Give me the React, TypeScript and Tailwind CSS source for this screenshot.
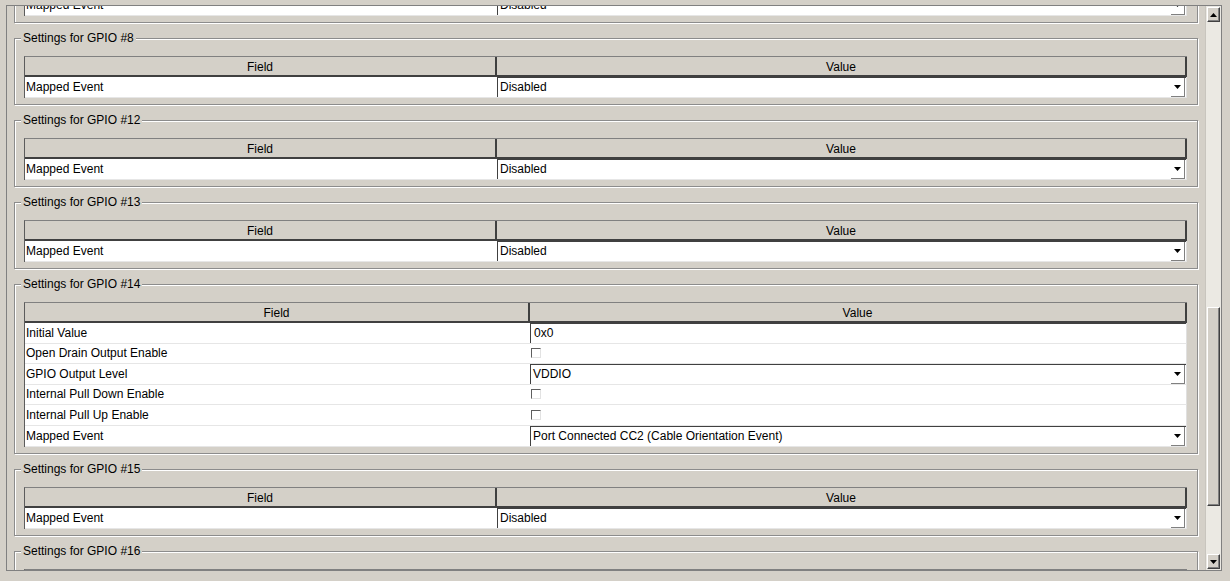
import React from "react";

type Row =
  | { label: string; type: "combo"; value: string; h?: string }
  | { label: string; type: "input"; value: string; h?: string }
  | { label: string; type: "check"; h?: string };

type Group = { name: string; fieldW: string; rows: Row[] };

const single = (name: string): Group => ({
  name,
  fieldW: "w-[472px]",
  rows: [{ label: "Mapped Event", type: "combo", value: "Disabled" }],
});

const groups: Group[] = [
  single("#7"),
  single("#8"),
  single("#12"),
  single("#13"),
  {
    name: "#14",
    fieldW: "w-[505px]",
    rows: [
      { label: "Initial Value", type: "input", value: "0x0", h: "h-[21px]" },
      { label: "Open Drain Output Enable", type: "check", h: "h-[20px]" },
      { label: "GPIO Output Level", type: "combo", value: "VDDIO", h: "h-[21px]" },
      { label: "Internal Pull Down Enable", type: "check", h: "h-[20px]" },
      { label: "Internal Pull Up Enable", type: "check", h: "h-[21px]" },
      {
        label: "Mapped Event",
        type: "combo",
        value: "Port Connected CC2 (Cable Orientation Event)",
        h: "h-[21px]",
      },
    ],
  },
  single("#15"),
  single("#16"),
];

function DownTri() {
  return (
    <svg width="7" height="4" viewBox="0 0 7 4">
      <path d="M0 0H7L3.5 4Z" fill="#000" />
    </svg>
  );
}

function UpTri() {
  return (
    <svg width="7" height="4" viewBox="0 0 7 4">
      <path d="M0 4H7L3.5 0Z" fill="#000" />
    </svg>
  );
}

function ValueCell({ row }: { row: Row }) {
  if (row.type === "combo") {
    return (
      <div className="flex-1 flex items-stretch border-l border-t border-[#404040] bg-white min-w-0">
        <div className="flex-1 flex items-center pl-[2px] pb-[2px] whitespace-nowrap">{row.value}</div>
        <div className="w-[14px] mr-[1px] flex items-center justify-center border-r border-b border-[#808080] bg-white">
          <DownTri />
        </div>
      </div>
    );
  }
  if (row.type === "input") {
    return (
      <div className="flex-1 flex items-center border-l border-t border-[#404040] bg-white pl-[3px] pb-[2px] whitespace-nowrap">
        {row.value}
      </div>
    );
  }
  return (
    <div className="flex-1 flex items-center pl-[1px] bg-white">
      <div className="w-[10px] h-[10px] -mt-[1px] border-t border-l border-[#5e5e5e] border-r border-b border-r-[#e2e2e2] border-b-[#e2e2e2] bg-white" />
    </div>
  );
}

function GroupBox({ g }: { g: Group }) {
  return (
    <div className="relative border border-[#8c8c8c] shadow-[inset_1px_1px_0_#ffffff,1px_1px_0_#ffffff] pt-[17px] pl-[9px] pr-[10px] pb-[6px]">
      <span className="absolute left-[6px] top-[-8px] px-[2px] bg-[#d4d0c8] leading-[14px] whitespace-nowrap">
        Settings for GPIO {g.name}
      </span>
      <div className="border-t border-l border-t-[#808080] border-l-[#5c5c5c]">
        <div className="flex h-[20px] bg-[#d4d0c8] border-b-2 border-r-2 border-[#404040]">
          <div className={`${g.fieldW} shrink-0 flex items-center justify-center pt-[1px] border-r-2 border-[#404040]`}>
            Field
          </div>
          <div className="flex-1 flex items-center justify-center pt-[1px]">Value</div>
        </div>
        {g.rows.map((r, i) => (
          <div
            key={i}
            className={`flex ${r.h ?? "h-[21px]"} bg-white border-b border-r border-b-[#e6e6e6] border-r-[#e0e0e0]`}
          >
            <div className={`${g.fieldW} shrink-0 flex items-center pl-[1px] pb-[1px] whitespace-nowrap`}>
              {r.label}
            </div>
            <ValueCell row={r} />
          </div>
        ))}
      </div>
    </div>
  );
}

function ScrollButton({ up }: { up: boolean }) {
  return (
    <div className="h-[15px] mx-[1px] flex items-center justify-center bg-[#d4d0c8] border-t border-l border-t-[#ffffff] border-l-[#ffffff] border-r border-b border-r-[#404040] border-b-[#404040] shadow-[inset_-1px_-1px_0_#808080]">
      {up ? <UpTri /> : <DownTri />}
    </div>
  );
}

export default function App() {
  return (
    <div className="w-[1230px] h-[581px] bg-[#d4d0c8] overflow-hidden pt-[5px] pl-[6px] text-[12px] leading-[14px] text-black font-['Liberation_Sans',Arial,sans-serif]">
      <div className="w-[1216px] h-[566px] flex border border-[#808080]">
        <div className="w-[1198px] h-full overflow-hidden">
          <div className="flex flex-col gap-[15px] mt-[-50px] px-[7px]">
            {groups.map((g) => (
              <GroupBox key={g.name} g={g} />
            ))}
          </div>
        </div>
        <div className="w-[16px] h-full flex flex-col py-[1px] bg-[#ebe9e3] border-l border-[#c8c5be]">
          <ScrollButton up />
          <div className="h-[285px]" />
          <div className="h-[199px] mx-[1px] bg-[#d4d0c8] border-t border-l border-t-[#ffffff] border-l-[#ffffff] border-r border-b border-r-[#404040] border-b-[#404040] shadow-[inset_-1px_-1px_0_#808080]" />
          <div className="flex-1" />
          <ScrollButton up={false} />
        </div>
      </div>
    </div>
  );
}
